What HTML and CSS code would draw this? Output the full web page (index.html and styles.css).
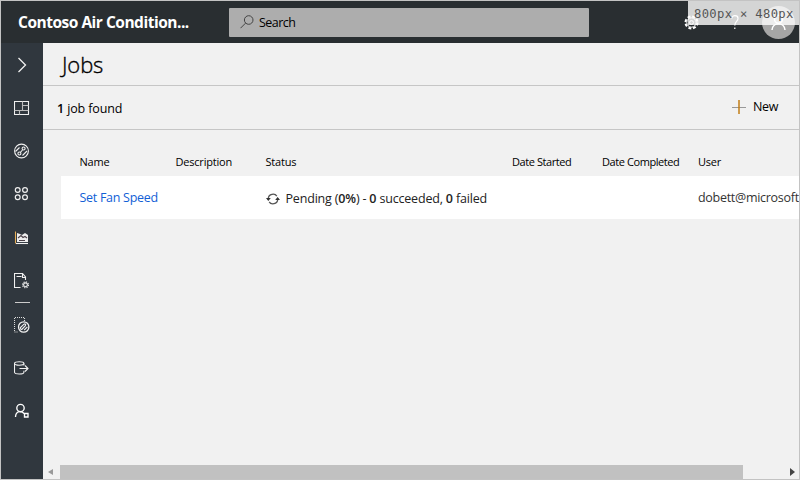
FILE: index.html
```html
<!DOCTYPE html>
<html lang="en">
<head>
<meta charset="utf-8">
<title>Jobs</title>
<link rel="stylesheet" href="styles.css">
</head>
<body>
<div class="window">
  <header class="topbar">
    <div class="brand"><span>Contoso Air Condition...</span></div>
    <div class="search">
      <svg width="14" height="14" viewBox="0 0 14 14" fill="none" stroke="#444"><circle cx="8.7" cy="5" r="4.3"/><path d="M5.6 8.1L.5 13.2"/></svg>
      <span>Search</span>
    </div>
    <div class="tools">
      <svg class="gear" width="15" height="15" viewBox="0 0 15 15" fill="none" stroke="#fff"><circle cx="7.5" cy="7.5" r="1.9"/><circle cx="7.5" cy="7.5" r="4.7"/><circle cx="7.5" cy="7.5" r="6" stroke-width="2" stroke-dasharray="2.900 1.810"/></svg>
      <svg class="help" width="8" height="15" viewBox="0 0 8 15" fill="none" stroke="#fff" stroke-width="1.2"><path d="M.8 3.5C.8-.3 7-.2 7 3.4 7 6.3 3.8 6.6 3.8 10.4M3.8 12.5V14"/></svg>
      <svg class="avatar" width="33" height="33" viewBox="0 0 33 33"><circle cx="16.5" cy="16.5" r="16.5" fill="#a6a6a6"/><g fill="none" stroke="#fff" stroke-width="1.5"><circle cx="16.5" cy="13.2" r="4"/><path d="M10 24c.5-8.5 12.500-8.500 13 0"/></g></svg>
    </div>
    <div class="size">800px × 480px</div>
  </header>
  <div class="body">
    <nav class="side">
      <a><svg class="chevron" viewBox="0 0 16 16"><path d="M4.500 1l7 7-7 7"/></svg></a>
      <a><svg viewBox="0 0 16 16"><path d="M.5 1.500h14v13H.5z"/><path class="dim" d="M8.500 1.500v9M.5 10.500h14M5.500 10.500v4M8.500 5.500h6"/></svg></a>
      <a><svg viewBox="0 0 16 16"><circle cx="7.500" cy="8" r="6.900"/><circle cx="9.600" cy="5.500" r="1.500"/><circle cx="5.400" cy="10.500" r="1.500"/><path d="M1.500 8.500l4-4M8.500 7L6.600 9.200M8.500 12.500l4.500-4.500"/></svg></a>
      <a><svg viewBox="0 0 16 16"><g stroke-width="1.200"><circle cx="3.700" cy="4" r="2.400"/><circle cx="11" cy="4" r="2.400"/><circle cx="3.700" cy="11.300" r="2.400"/><circle cx="11" cy="11.300" r="2.400"/></g></svg></a>
      <a><svg viewBox="0 0 16 16"><path class="gold" d="M1.500 2.500v12"/><path d="M2 14.500h12"/><path class="fill" d="M3 7V4l3 1 2 1 3-2 3 2v7H3z"/><path class="ink" d="M4 9l3-2.500 2 2 2-1 2 1.500M5 11.500h6"/></svg></a>
      <a><svg viewBox="0 0 16 16"><path d="M6.500 14.500h-6v-14h8l3 3.500v3M8.500.5v4h3M2.500 3.500h5"/><circle cx="11.500" cy="11.800" r="1.900"/><circle cx="11.500" cy="11.800" r="3" stroke-dasharray="1.200 1.150"/></svg></a>
      <i class="divider"></i>
      <a><svg viewBox="0 0 16 16"><path class="dots" d="M3.500 15H0M.5 14V0M1 .5h10M10.500 1v3"/><circle cx="9.700" cy="10" r="5.200" stroke-width="1.300"/><path d="M6 11l4-3.800c1-.8 2.300.4 1.400 1.500L8.200 12c-1 1-2.400-.2-1.500-1.200M10.200 13l3.200-3.200"/></svg></a>
      <a><svg viewBox="0 0 16 16"><ellipse cx="5.200" cy="3.500" rx="4.700" ry="1.700"/><path d="M.5 3.500v8.700c0 2.300 9.400 2.300 9.400 0v-1.500M9.900 3.500v2M5.500 8.500h8.500M11 5.500l3 3-3 3"/></svg></a>
      <a><svg viewBox="0 0 16 16" class="bold"><circle cx="6.500" cy="5" r="3.700"/><path d="M1.500 14c.3-6.500 6.500-6.500 8.500-3.300"/><path d="M10.500 10.500h3.500v3.500h-3.500z"/></svg></a>
    </nav>
    <main class="main">
      <h1><span>Jobs</span></h1>
      <div class="bar">
        <div class="found"><b>1</b> job found</div>
        <div class="new"><svg width="14" height="14" viewBox="0 0 14 14"><path d="M0 7.500h14" stroke="#999"/><path d="M7 0v14" stroke="#c27d14" stroke-width="1.500"/></svg><span>New</span></div>
      </div>
      <div class="grid">
        <div class="row head"><span>Name</span><span>Description</span><span>Status</span><span class="started">Date Started</span><span class="completed">Date Completed</span><span>User</span></div>
        <div class="row job">
          <a class="name">Set Fan Speed</a><span></span>
          <span class="status"><svg width="14" height="12" viewBox="0 0 14 12" fill="none" stroke="#555" stroke-width="1.300"><path d="M2.300 7V5.500C2.500.6 9 .1 10.800 3.100M11.700 5v1.500c-.2 4.900-6.700 5.400-8.500 2.400"/><path fill="#333" stroke="none" d="M0 5h4.800L2.300 7.900zM9.200 7H14l-2.400-2.900z"/></svg><span class="pending">Pending (<b>0%</b>) - <b>0</b> succeeded, <b>0</b> failed</span></span>
          <span></span><span></span><span class="user">dobett@microsoft</span>
        </div>
      </div>
      <div class="scroll"><i class="left"></i><i class="thumb"></i><i class="right"></i></div>
    </main>
  </div>
</div>
</body>
</html>
```
FILE: styles.css
```css
* { box-sizing: border-box; }
body { margin: 0; font: 12.5px/18px "Open Sans", "Noto Sans", sans-serif; color: #000; }
b { font-weight: 600; }
.window { position: relative; width: 800px; height: 480px; border: 1px solid #c3c3c3; display: flex; flex-direction: column; overflow: hidden; background: #f1f1f1; }
svg { display: block; flex: none; }
.topbar { height: 42px; flex: none; display: flex; align-items: center; background: #292e31; color: #fff; }
.brand { width: 228px; padding-left: 17px; font-size: 15.5px; font-weight: 700; letter-spacing: -.49px; white-space: nowrap; }
.search { width: 360px; height: 29px; background: #adadad; color: #000; border-radius: 1px; display: flex; align-items: center; gap: 5px; padding-left: 11px; letter-spacing: -.55px; }
.search span { padding-top: 2px; }
.tools { flex: 1; display: flex; align-items: center; padding-left: 95px; }
.help { margin-left: 32px; }
.avatar { margin-left: 23px; }
.size { position: absolute; top: 0; right: 0; width: 111px; height: 24px; padding: 3px 0 0 6px; background: rgba(255,255,255,.8); color: #555; font: 12.2px/20px "DejaVu Sans Mono", monospace; letter-spacing: .33px; white-space: nowrap; }
.body { flex: 1; display: flex; min-height: 0; }
.side { width: 42px; flex: none; background: #30373e; }
.side a { height: 43.2px; display: flex; align-items: center; justify-content: center; }
.side svg { width: 16px; height: 16px; fill: none; stroke: #f0f0f0; stroke-width: 1.1; }
.side .chevron { stroke-width: 1.3; }
.side .dim { stroke: #bbb; }
.side .dots { stroke: #ddd; stroke-dasharray: 1 1; }
.side .gold { stroke: #e6ae57; }
.side .fill { fill: #eee; stroke: none; }
.side .ink { stroke: #4b4048; }
.side .bold { stroke: #fff; stroke-width: 1.35; }
.divider { display: block; width: 15px; height: 1px; margin: 0 auto; background: #ccc; }
.main { flex: 1; min-width: 0; display: flex; flex-direction: column; }
h1 { height: 43px; margin: 0; padding: 0 0 0 19px; border-bottom: 1px solid #c6c6c6; font-size: 22px; font-weight: 300; line-height: 43px; letter-spacing: -.1px; -webkit-text-stroke: .35px #000; }
.bar { height: 44px; flex: none; border-bottom: 1px solid #c6c6c6; display: flex; justify-content: space-between; align-items: center; padding: 0 21px 0 14px; letter-spacing: -.3px; }
.found { padding-top: 2px; letter-spacing: -.12px; }
.new { display: flex; align-items: center; gap: 7px; margin-top: -2px; letter-spacing: -.4px; }
.grid { padding: 13px 0 0 18px; }
.row { display: grid; grid-template-columns: 96px 90px 246.5px 90px 96px 120px; align-items: center; padding-left: 18.5px; white-space: nowrap; }
.head { height: 33px; padding-top: 4px; font-size: 11px; letter-spacing: -.2px; }
.started, .completed { letter-spacing: -.42px; }
.job { height: 43px; background: #fff; color: #222; letter-spacing: -.29px; }
.name { color: #1160d6; }
.user { color: #333; }
.status { display: flex; align-items: center; gap: 6px; }
.status svg { margin-top: 3px; }
.pending { padding-top: 2px; letter-spacing: -.18px; }
.scroll { height: 14px; margin-top: auto; display: flex; align-items: center; background: #f1f1f1; }
.left, .right { border: 4px solid transparent; }
.left { width: 17px; border: 0; height: 14px; display: flex; align-items: center; padding-left: 5px; }
.left::before { content: ""; border: 3.5px solid transparent; border-right: 5px solid #999; border-left: 0; }
.thumb { width: 683px; height: 14px; background: #c1c1c1; }
.right { margin-left: 47px; border-left: 5px solid #444; border-right: 0; }
```
